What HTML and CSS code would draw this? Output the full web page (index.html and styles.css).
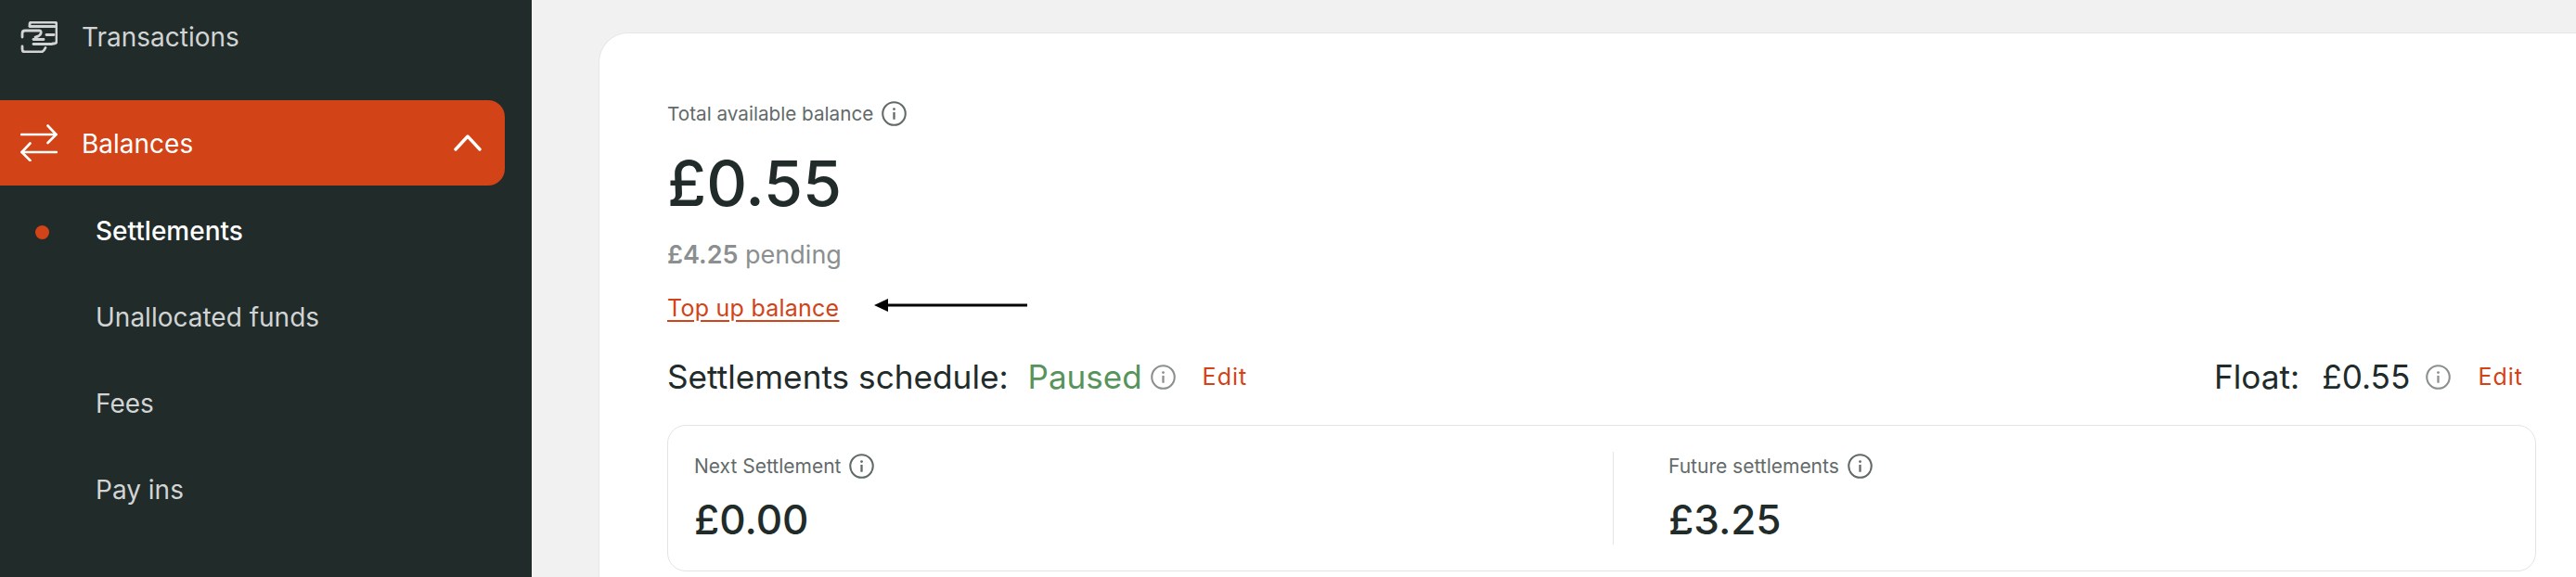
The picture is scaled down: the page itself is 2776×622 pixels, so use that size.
FILE: index.html
```html
<!DOCTYPE html>
<html lang="en">
  <head>
    <meta charset="UTF-8" />
    <meta name="viewport" content="width=device-width, initial-scale=1.0" />
    <title>Settlements</title>
    <link rel="stylesheet" href="styles.css">
  </head>

  <body>
    <div class="app">
      <!-- Sidebar -->
      <nav class="sidebar">
        <a class="nav-item">
          <svg class="nav-icon" viewBox="0 0 40 34" fill="none" stroke="#d2d4d4" stroke-width="2.8" stroke-linecap="round" stroke-linejoin="round">
            <path d="M10 5V3Q10 1 12 1H36.5Q39 1 39 3.5V21.5Q39 24 36.5 24H35" />
            <path d="M10 5.5H39" />
            <path d="M2 17V13Q2 10 5 10H20Q23 10 22 13Q21 16 16 17" />
            <path d="M28 14.5H36" />
            <path d="M14 19.5H25" />
            <path d="M14 24.5H34" />
            <path d="M2 27V30Q2 33 5 33H22Q25 33 27 28.5" />
          </svg>
          <span>Transactions</span>
        </a>

        <a class="nav-item nav-active">
          <svg class="nav-icon" viewBox="0 0 40 40" fill="none" stroke="#fff" stroke-width="2.6" stroke-linecap="round" stroke-linejoin="round">
            <path d="M1 11H38.5" />
            <path d="M29.5 1.5L38.5 11L29.5 20" />
            <path d="M39 30H1.5" />
            <path d="M10.5 20.5L1.5 30L10.5 39" />
          </svg>
          <span>Balances</span>
          <svg class="nav-chevron" viewBox="0 0 30 18" fill="none" stroke="#fff" stroke-width="3.4" stroke-linecap="round" stroke-linejoin="round">
            <path d="M2 16L15 2L28 16" />
          </svg>
        </a>

        <a class="sub-item sub-active"><i class="sub-dot"></i>Settlements</a>
        <a class="sub-item">Unallocated funds</a>
        <a class="sub-item">Fees</a>
        <a class="sub-item">Pay ins</a>
      </nav>

      <!-- Main content -->
      <main class="main">
        <section class="card">
          <div class="label">
            Total available balance
            <svg class="info" viewBox="0 0 26 26"><use href="#info-glyph" /></svg>
          </div>
          <div class="balance">£0.55</div>
          <div class="pending"><b>£4.25</b> pending</div>
          <div class="top-up">
            <a class="top-up-link">Top up balance</a>
            <svg class="arrow" viewBox="0 0 165 14">
              <path d="M0 7L15 0V14Z" fill="#000" />
              <path d="M12 7H165" stroke="#000" stroke-width="3" />
            </svg>
          </div>

          <div class="schedule">
            <div class="schedule-group">
              <span class="schedule-title">Settlements schedule:</span>
              <span class="paused">Paused</span>
              <svg class="info info-light" viewBox="0 0 26 26"><use href="#info-glyph" /></svg>
              <a class="edit">Edit</a>
            </div>
            <div class="schedule-group">
              <span class="schedule-title">Float:</span>
              <span class="schedule-title float-amount">£0.55</span>
              <svg class="info info-light" viewBox="0 0 26 26"><use href="#info-glyph" /></svg>
              <a class="edit">Edit</a>
            </div>
          </div>

          <div class="stats">
            <div class="stat stat-next">
              <div class="label label-small">
                Next Settlement
                <svg class="info" viewBox="0 0 26 26"><use href="#info-glyph" /></svg>
              </div>
              <div class="stat-value">£0.00</div>
            </div>
            <div class="stat stat-future">
              <div class="label label-small">
                Future settlements
                <svg class="info" viewBox="0 0 26 26"><use href="#info-glyph" /></svg>
              </div>
              <div class="stat-value">£3.25</div>
            </div>
          </div>
        </section>
      </main>
    </div>

    <svg class="defs" aria-hidden="true">
      <symbol id="info-glyph" viewBox="0 0 26 26">
        <circle cx="13" cy="13" r="11.8" fill="none" stroke="currentColor" stroke-width="2" />
        <circle cx="13" cy="8.3" r="1.4" fill="currentColor" />
        <rect x="11.9" y="11.5" width="2.2" height="7.5" fill="currentColor" />
      </symbol>
    </svg>
  </body>
</html>
```

FILE: styles.css
```css
* {
  box-sizing: border-box;
}

html,
body {
  margin: 0;
  height: 100%;
  overflow: hidden;
}

body {
  font-family: "Inter", "Noto Sans", sans-serif;
  color: #202b2a;
  background: #f1f1f1;
}

.app {
  display: flex;
  height: 622px;
}

/* Sidebar */
.sidebar {
  flex: 0 0 573px;
  padding-right: 29px;
  background: #202b2a;
}

.nav-item {
  display: flex;
  align-items: center;
  height: 80px;
  padding-left: 22px;
  font-size: 28px;
  color: #d2d4d4;
}

.nav-icon {
  width: 40px;
  height: 34px;
  margin-right: 26px;
  flex: none;
}

.nav-active {
  height: 92px;
  margin-top: 28px;
  padding-right: 25px;
  color: #fff;
  background: #d24317;
  border-radius: 0 18px 18px 0;
}

.nav-active span {
  padding-top: 2px;
}

.nav-active .nav-icon {
  height: 40px;
}

.nav-chevron {
  width: 30px;
  height: 18px;
  margin-left: auto;
}

.sub-item {
  display: flex;
  align-items: center;
  position: relative;
  height: 93px;
  padding: 4px 0 0 103px;
  font-size: 28px;
  color: #d2d4d4;
}

.sub-active {
  color: #fff;
  font-weight: 500;
}

.sub-dot {
  position: absolute;
  left: 38px;
  top: 43px;
  width: 15px;
  height: 15px;
  background: #d24317;
  border-radius: 50%;
}

/* Main */
.main {
  flex: 1;
  padding: 35px 0 0 72px;
  min-width: 0;
}

.card {
  height: 100%;
  padding: 73px 43px 0 73px;
  background: #fff;
  border: 1px solid #e6e6e6;
  border-right: 0;
  border-bottom: 0;
  border-radius: 32px 0 0 0;
}

.label {
  display: flex;
  align-items: center;
  gap: 9px;
  height: 26px;
  font-size: 20.7px;
  color: #626a69;
}

.info {
  width: 27px;
  height: 27px;
  color: #626a69;
  flex: none;
}

.info-light {
  color: #8b8f8f;
}

.balance {
  margin-top: 27px;
  font-size: 68px;
  line-height: 70px;
  font-weight: 500;
}

.pending {
  margin-top: 26px;
  font-size: 27px;
  line-height: 34px;
  color: #8b8f8f;
}

.pending b {
  font-weight: 600;
}

.top-up {
  display: flex;
  align-items: center;
  margin-top: 25px;
  height: 30px;
}

.top-up-link {
  font-size: 25px;
  line-height: 30px;
  letter-spacing: 0.25px;
  color: #d24317;
  text-decoration: underline;
  text-underline-offset: 4px;
}

.arrow {
  width: 165px;
  height: 14px;
  margin: -6px 0 0 38px;
}

/* Schedule row */
.schedule {
  display: flex;
  justify-content: space-between;
  align-items: center;
  height: 42px;
  margin-top: 38px;
  padding-right: 14px;
}

.schedule-group {
  display: flex;
  align-items: center;
}

.schedule-title {
  font-size: 35.2px;
  font-weight: 400;
}

.float-amount {
  margin-left: 24px;
}

.paused {
  margin-left: 21px;
  font-size: 35px;
  color: #56945c;
}

.schedule-group .info {
  margin-left: 9px;
}

.schedule-group .float-amount + .info {
  margin-left: 17px;
}

.edit {
  margin-left: 29px;
  font-size: 25px;
  letter-spacing: 1px;
  color: #d24317;
}

/* Stats box */
.stats {
  display: flex;
  height: 158px;
  margin-top: 31px;
  padding: 28px 0;
  border: 1px solid #e4e4e4;
  border-radius: 20px;
}

.stat-next {
  flex: 0 0 1019px;
  padding-left: 28px;
  border-right: 1px solid #e4e4e4;
}

.stat-future {
  flex: 1;
  padding-left: 59px;
}

.label-small {
  font-size: 21px;
  height: 30px;
}

.stat-value {
  margin-top: 21px;
  font-size: 44px;
  line-height: 44px;
  font-weight: 500;
}

.defs {
  display: none;
}
```
